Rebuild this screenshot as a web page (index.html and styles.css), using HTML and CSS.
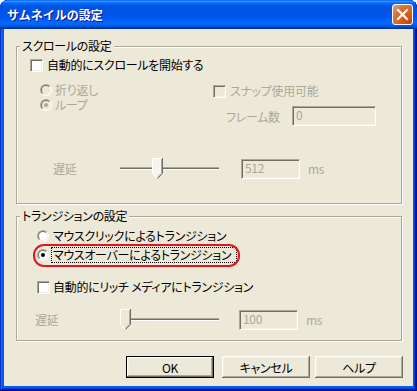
FILE: index.html
```html
<!DOCTYPE html>
<html lang="ja">
<head>
    <meta charset="UTF-8">
    <meta name="viewport" content="width=device-width, initial-scale=1.0">
    <title>サムネイルの設定</title>
    <link rel="stylesheet" href="styles.css">
</head>
<body>
    <div class="window">
        <div class="titlebar">
            <span class="title">サムネイルの設定</span>
            <button class="close" type="button">
                <svg width="13" height="13" viewBox="0 0 13 13">
                    <path d="M2 2L11 11M11 2L2 11" stroke="#fff" stroke-width="2.2" stroke-linecap="square"/>
                </svg>
            </button>
        </div>

        <div class="client">
            <!-- スクロールの設定 -->
            <div class="group group-scroll">
                <span class="group-title">スクロールの設定</span>
                <div class="row row-auto"><span class="check"></span><span>自動的にスクロールを開始する</span></div>

                <div class="cols">
                    <div class="col-left">
                        <div class="row radio-row disabled"><span class="radio"><span></span></span>折り返し</div>
                        <div class="row radio-row second disabled"><span class="radio on"><span></span></span>ループ</div>
                    </div>
                    <div class="col-right">
                        <div class="row row-snap disabled"><span class="check"></span>スナップ使用可能</div>
                        <div class="field disabled"><span class="field-label">フレーム数</span><span class="textbox frames">0</span></div>
                    </div>
                </div>

                <div class="slider-row slider-scroll disabled">
                    <span class="slider-label">遅延</span>
                    <div class="slider">
                        <div class="track"></div>
                        <svg class="thumb" style="left: 32px" width="11" height="21" viewBox="0 0 11 21">
                            <path d="M0 0H10V15L5 20L0 15Z" fill="#F5F4EF"/>
                            <path d="M0.5 15V0.5H9.5" stroke="#fff" fill="none"/>
                            <path d="M0.5 15.5L5 20" stroke="#fff" fill="none"/>
                            <path d="M10.5 0V15.5L5.5 20.5" stroke="#716F64" fill="none"/>
                            <path d="M9.5 1V15L5.2 19.3" stroke="#ACA899" fill="none"/>
                        </svg>
                    </div>
                    <span class="textbox delay">512</span>
                    <span class="unit">ms</span>
                </div>
            </div>

            <!-- トランジションの設定 -->
            <div class="group group-trans">
                <span class="group-title">トランジションの設定</span>
                <div class="row trans-row first"><span class="radio"><span></span></span>マウスクリックによるトランジション</div>
                <div class="row trans-row picked"><span class="radio on"><span></span></span><span class="focus">マウスオーバーによるトランジション</span></div>
                <div class="row trans-row rich"><span class="check"></span>自動的にリッチ メディアにトランジション</div>

                <div class="slider-row slider-trans disabled">
                    <span class="slider-label">遅延</span>
                    <div class="slider">
                        <div class="track"></div>
                        <svg class="thumb" style="left: 0px" width="11" height="21" viewBox="0 0 11 21">
                            <path d="M0 0H10V15L5 20L0 15Z" fill="#ECE9D8"/>
                            <path d="M0.5 15V0.5H9.5" stroke="#fff" fill="none"/>
                            <path d="M0.5 15.5L5 20" stroke="#fff" fill="none"/>
                            <path d="M10.5 0V15.5L5.5 20.5" stroke="#716F64" fill="none"/>
                            <path d="M9.5 1V15L5.2 19.3" stroke="#ACA899" fill="none"/>
                        </svg>
                    </div>
                    <span class="textbox delay">100</span>
                    <span class="unit">ms</span>
                </div>
            </div>

            <div class="buttons">
                <button class="btn btn-default" type="button">OK</button>
                <button class="btn btn-cancel" type="button">キャンセル</button>
                <button class="btn" type="button">ヘルプ</button>
            </div>
        </div>
    </div>
</body>
</html>
```

FILE: styles.css
```css
* {
    box-sizing: border-box;
}

body {
    margin: 0;
    background: #fff;
    font-family: "Noto Sans CJK JP", "Liberation Sans", sans-serif;
    font-size: 12px;
    font-feature-settings: "palt";
    letter-spacing: -0.3px;
    color: #000;
}

.window {
    width: 417px;
    height: 391px;
    display: flex;
    flex-direction: column;
    background: #0D5CE8;
    border-radius: 8px 8px 0 0;
    overflow: hidden;
    box-shadow: inset -1px -1px #00138C, inset 1px 1px #0831D9, inset -2px -2px #001EA0, inset 2px 2px #166AEE, inset -3px -3px #003BDA, inset 3px 3px #0855DD;
}

.titlebar {
    flex: none;
    height: 29px;
    display: flex;
    align-items: center;
    justify-content: space-between;
    padding: 0 4px 0 7px;
    border-radius: 8px 8px 0 0;
    background: linear-gradient(180deg, #0058EE 0%, #3593FF 4%, #288EFF 6%, #127DFF 8%, #036FFC 10%, #0262EE 14%, #0057E5 20%, #0054E3 24%, #0055EB 56%, #005BF5 66%, #026AFE 76%, #0062EF 86%, #0052D6 92%, #0040AB 94%, #003092 100%);
}

.title {
    color: #fff;
    font-weight: bold;
    font-size: 12px;
    font-feature-settings: normal;
    letter-spacing: 0;
    text-shadow: 1px 1px #0F1089;
}

.close {
    width: 21px;
    height: 21px;
    padding: 0;
    display: flex;
    align-items: center;
    justify-content: center;
    border: 1px solid #fff;
    border-radius: 3px;
    background: radial-gradient(circle at 90% 90%, #CC4600 0%, #DC6527 55%, #CD7546 68%, #E5A585 100%);
}

.client {
    flex: 1;
    margin: 0 4px 5px;
    padding: 17px 0 0 12px;
    background: #ECE9D8;
}

/* group boxes */
.group {
    position: relative;
    width: 386px;
    border: 1px solid #ACA899;
    box-shadow: inset 1px 1px #fff, 1px 1px #fff;
}

.group-scroll {
    height: 158px;
}

.group-trans {
    height: 125px;
    margin-top: 12px;
}

.group-title {
    position: absolute;
    top: -8px;
    left: 3px;
    padding: 0 2px;
    line-height: 14px;
    background: #ECE9D8;
}

.row {
    display: flex;
    align-items: center;
    height: 14px;
    line-height: 14px;
    white-space: nowrap;
}

.disabled {
    color: #ACA899;
}

/* classic controls */
.check {
    flex: none;
    width: 13px;
    height: 13px;
    border: 1px solid;
    border-color: #ACA899 #fff #fff #ACA899;
    background: #fff;
    box-shadow: inset 1px 1px #716F64, inset -1px -1px #F1EFE2;
}

.disabled .check {
    background: #ECE9D8;
}

.radio {
    flex: none;
    width: 12px;
    height: 12px;
    border-radius: 50%;
    border: 1px solid;
    border-color: #ACA899 #fff #fff #ACA899;
}

.radio > span {
    display: flex;
    align-items: center;
    justify-content: center;
    width: 10px;
    height: 10px;
    border-radius: 50%;
    border: 1px solid;
    border-color: #716F64 #F1EFE2 #F1EFE2 #716F64;
    background: #fff;
}

.disabled .radio > span {
    background: #ECE9D8;
}

.radio.on > span::after {
    content: "";
    width: 4px;
    height: 4px;
    border-radius: 50%;
    background: #000;
}

.disabled .radio.on > span::after {
    background: #ACA899;
}

.textbox {
    height: 20px;
    padding: 0 3px;
    line-height: 16px;
    border: 1px solid;
    border-color: #ACA899 #fff #fff #ACA899;
    box-shadow: inset 1px 1px #716F64, inset -1px -1px #F1EFE2;
    background: #ECE9D8;
    color: #ACA899;
}

/* スクロールの設定 */
.row-auto {
    margin-top: 11px;
    padding-left: 13px;
    gap: 4px;
}

.cols {
    display: flex;
    margin-top: 11px;
}

.col-left {
    width: 196px;
    padding-left: 23px;
}

.radio-row {
    gap: 3px;
}

.radio-row.second {
    margin-top: 1px;
}

.row-snap {
    margin-top: 1px;
    gap: 4px;
}

.field {
    display: flex;
    align-items: center;
    margin-top: 8px;
    padding-left: 13px;
}

.field-label {
    width: 66px;
}

.frames {
    width: 84px;
}

/* sliders */
.slider-row {
    display: flex;
    align-items: center;
    height: 21px;
}

.slider-scroll {
    margin-top: 32px;
    padding-left: 36px;
}

.slider-scroll .slider-label {
    width: 67px;
}

.slider-trans {
    margin-top: 15px;
    padding-left: 18px;
}

.slider-trans .slider-label {
    width: 85px;
}

.slider {
    position: relative;
    width: 99px;
    height: 21px;
    display: flex;
    align-items: center;
}

.track {
    width: 100%;
    height: 3px;
    border-top: 1px solid #ACA899;
    border-bottom: 1px solid #fff;
    background: #716F64;
}

.thumb {
    position: absolute;
    top: 0;
}

.delay {
    width: 59px;
}

.slider-scroll .delay {
    margin-left: 22px;
}

.slider-trans .delay {
    margin-left: 20px;
}

.unit {
    margin-left: 8px;
}

/* トランジションの設定 */
.trans-row {
    padding-left: 20px;
    gap: 4px;
}

.trans-row.first {
    margin-top: 12px;
}

.picked {
    position: relative;
    width: max-content;
    margin-top: 5px;
    gap: 3px;
}

.picked::after {
    content: "";
    position: absolute;
    top: -4px;
    bottom: -5px;
    left: 16px;
    right: -4px;
    border: 2px solid #E5141C;
    border-radius: 11px;
}

.focus {
    padding: 0 5px 0 1px;
    outline: 1px dotted #000;
    outline-offset: 0;
}

.rich {
    margin-top: 18px;
    gap: 3px;
}

/* buttons */
.buttons {
    display: flex;
    justify-content: flex-end;
    margin-top: 15px;
    padding-right: 10px;
}

.btn {
    width: 88px;
    height: 22px;
    padding: 0;
    border: none;
    font: inherit;
    font-feature-settings: "palt";
    letter-spacing: -0.3px;
    background: #ECE9D8;
    box-shadow: inset -1px -1px #716F64, inset 1px 1px #fff, inset -2px -2px #ACA899, inset 2px 2px #F1EFE2;
}

.btn-default {
    margin-right: 8px;
    border: 1px solid #000;
}

.btn-cancel {
    margin-right: 5px;
}
```
